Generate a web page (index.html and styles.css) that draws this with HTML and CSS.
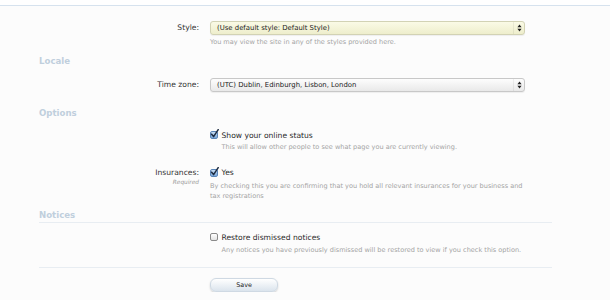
FILE: index.html
```html
<!DOCTYPE html>
<html lang="en">
<head>
    <meta charset="UTF-8">
    <title>Preferences</title>
    <link rel="stylesheet" href="styles.css">
</head>
<body>

<div class="page-head"></div>

<form class="xen-form">
    <div class="ctrl-unit first">
        <div class="ctrl-label">Style:</div>
        <div class="ctrl-field">
            <div class="select select-yellow">
                <span class="select-text">(Use default style: Default Style)</span>
                <span class="select-arrows">
                    <svg width="5" height="8" viewBox="0 0 5 8"><path d="M2.5 0.5 L4.6 3.2 L0.4 3.2 Z M2.5 7.5 L4.6 4.8 L0.4 4.8 Z" fill="#222"/></svg>
                </span>
            </div>
            <p class="hint hint-after-select">You may view the site in any of the styles provided here.</p>
        </div>
    </div>

    <h3 class="section-head head-locale">Locale</h3>

    <div class="ctrl-unit tz">
        <div class="ctrl-label">Time zone:</div>
        <div class="ctrl-field">
            <div class="select">
                <span class="select-text">(UTC) Dublin, Edinburgh, Lisbon, London</span>
                <span class="select-arrows">
                    <svg width="5" height="8" viewBox="0 0 5 8"><path d="M2.5 0.5 L4.6 3.2 L0.4 3.2 Z M2.5 7.5 L4.6 4.8 L0.4 4.8 Z" fill="#222"/></svg>
                </span>
            </div>
        </div>
    </div>

    <h3 class="section-head head-options">Options</h3>

    <div class="ctrl-unit online">
        <div class="ctrl-label"></div>
        <div class="ctrl-field">
            <div class="check-row">
                <span class="cb checked">
                    <svg width="9" height="10" viewBox="0 0 9 10"><path d="M1.6 5.2 L3.6 7.6 L8.2 0.6" fill="none" stroke="#1d2c42" stroke-width="1.5" stroke-linecap="round" stroke-linejoin="round"/></svg>
                </span>
                <span class="check-text">Show your online status</span>
            </div>
            <p class="hint hint-indent">This will allow other people to see what page you are currently viewing.</p>
        </div>
    </div>

    <div class="ctrl-unit insurances">
        <div class="ctrl-label">
            Insurances:
            <span class="required">Required</span>
        </div>
        <div class="ctrl-field">
            <div class="check-row">
                <span class="cb checked">
                    <svg width="9" height="10" viewBox="0 0 9 10"><path d="M1.6 5.2 L3.6 7.6 L8.2 0.6" fill="none" stroke="#1d2c42" stroke-width="1.5" stroke-linecap="round" stroke-linejoin="round"/></svg>
                </span>
                <span class="check-text">Yes</span>
            </div>
            <p class="hint hint-block">By checking this you are confirming that you hold all relevant insurances for your business and tax registrations</p>
        </div>
    </div>

    <h3 class="section-head head-notices">Notices</h3>

    <div class="ctrl-unit notices">
        <div class="ctrl-label"></div>
        <div class="ctrl-field">
            <div class="check-row">
                <span class="cb"></span>
                <span class="check-text">Restore dismissed notices</span>
            </div>
            <p class="hint hint-indent">Any notices you have previously dismissed will be restored to view if you check this option.</p>
        </div>
    </div>

    <div class="submit-unit">
        <div class="ctrl-label"></div>
        <div class="ctrl-field">
            <button type="button" class="button">Save</button>
        </div>
    </div>
</form>

</body>
</html>
```

FILE: styles.css
```css
body {
    margin: 0;
    background-color: #fcfcfc;
    font-family: "DejaVu Sans", Verdana, sans-serif;
    color: #333;
}
.page-head {
    height: 5px;
    border-bottom: 1px solid #d6e2ee;
    background-color: #fff;
}
.xen-form {
    margin-left: 39px;
    width: 513px;
}
.ctrl-unit, .submit-unit {
    display: flex;
}
.ctrl-label {
    width: 160px;
    padding-right: 11px;
    text-align: right;
    font-size: 7.6px;
    line-height: 14px;
    color: #333;
}
.ctrl-field {
    width: 315px;
}
.first {
    margin-top: 15px;
}
.select {
    display: flex;
    align-items: center;
    height: 12px;
    border: 1px solid #c8c8c8;
    border-radius: 3px;
    background: linear-gradient(to bottom, #fdfdfd, #e9e9e9);
    box-shadow: 0 1px 1px rgba(0, 0, 0, 0.06);
}
.select-yellow {
    border-color: #d2d2b4;
    background: linear-gradient(to bottom, #fafae6, #eeeecc);
}
.select-text {
    flex-grow: 1;
    padding-left: 6px;
    font-size: 6.9px;
    color: #222;
    white-space: nowrap;
}
.select-arrows {
    width: 10px;
    height: 12px;
    display: flex;
    align-items: center;
    justify-content: center;
    border-left: 1px solid rgba(0, 0, 0, 0.06);
}
.hint {
    margin: 0;
    font-size: 6.55px;
    line-height: 9.5px;
    color: #a4a4a4;
}
.hint-after-select {
    margin-top: 3px;
}
.section-head {
    margin: 0;
    font-size: 8.6px;
    font-weight: bold;
    line-height: 12px;
    color: #c0cfdd;
}
.head-locale {
    margin-top: 7px;
}
.tz {
    margin-top: 11px;
}
.head-options {
    margin-top: 15px;
}
.online {
    margin-top: 11px;
}
.check-row {
    display: flex;
    align-items: center;
    height: 11px;
}
.cb {
    position: relative;
    box-sizing: border-box;
    width: 8px;
    height: 8px;
    margin-right: 3.5px;
    border: 1px solid #8a8a8a;
    border-radius: 2px;
    background: linear-gradient(to bottom, #fff, #e4e4e4);
}
.cb.checked {
    border-color: #5a85b8;
    background: linear-gradient(to bottom, #c7dcf2, #79a7da);
}
.cb svg {
    position: absolute;
    left: -1px;
    top: -3px;
}
.check-text {
    font-size: 7.6px;
    color: #2a2a2a;
}
.hint-indent {
    margin-top: 2.5px;
    padding-left: 11.5px;
}
.insurances {
    margin-top: 14.5px;
}
.insurances .ctrl-label {
    line-height: 11px;
}
.required {
    display: block;
    font-size: 5.8px;
    font-style: italic;
    line-height: 8px;
    color: #999;
}
.hint-block {
    margin-top: 4px;
}
.head-notices {
    margin-top: 8px;
    padding-bottom: 1px;
    border-bottom: 1px solid #e8edf2;
}
.notices {
    margin-top: 8.5px;
}
.notices .hint-indent {
    margin-top: 3px;
}
.submit-unit {
    margin-top: 11.5px;
    border-top: 1px solid #e8edf2;
    padding-top: 4.5px;
}
.button {
    width: 68px;
    height: 14px;
    padding: 0;
    border: 1px solid #cfd9e3;
    border-radius: 6px;
    background: linear-gradient(to bottom, #ffffff, #dbe4ed);
    box-shadow: 0 1px 2px rgba(0, 0, 0, 0.18);
    font-family: "DejaVu Sans", Verdana, sans-serif;
    font-size: 6.4px;
    color: #222;
}
```
